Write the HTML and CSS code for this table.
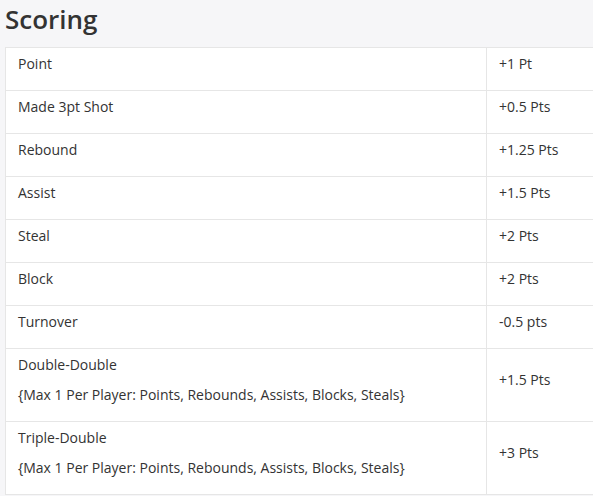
FILE: index.html
```html
<!DOCTYPE html>
<html>
<head>
<meta charset="utf-8">
<link rel="stylesheet" href="styles.css">
</head>
<body>
<div class="page">
  <h2 class="title">Scoring</h2>
  <table class="scoring">
    <tr><td class="name"><p>Point</p></td><td class="pts"><p>+1 Pt</p></td></tr>
    <tr><td class="name"><p>Made 3pt Shot</p></td><td class="pts"><p>+0.5 Pts</p></td></tr>
    <tr><td class="name"><p>Rebound</p></td><td class="pts"><p>+1.25 Pts</p></td></tr>
    <tr><td class="name"><p>Assist</p></td><td class="pts"><p>+1.5 Pts</p></td></tr>
    <tr><td class="name"><p>Steal</p></td><td class="pts"><p>+2 Pts</p></td></tr>
    <tr><td class="name"><p>Block</p></td><td class="pts"><p>+2 Pts</p></td></tr>
    <tr><td class="name"><p>Turnover</p></td><td class="pts"><p>-0.5 pts</p></td></tr>
    <tr><td class="name"><p>Double-Double</p><p>{Max 1 Per Player: Points, Rebounds, Assists, Blocks, Steals}</p></td><td class="pts"><p>+1.5 Pts</p></td></tr>
    <tr><td class="name"><p>Triple-Double</p><p>{Max 1 Per Player: Points, Rebounds, Assists, Blocks, Steals}</p></td><td class="pts"><p>+3 Pts</p></td></tr>
  </table>
</div>
</body>
</html>
```
FILE: styles.css
```css
html, body {
  margin: 0;
  padding: 0;
  background: #f6f6f8;
  overflow: hidden;
}
body {
  font-family: "Open Sans", "Liberation Sans", sans-serif;
  color: #333;
}
.page {
  padding: 0 0 0 5px;
  width: 640px;
}
.title {
  margin: 0;
  padding-top: 1px;
  height: 46px;
  font-size: 26px;
  font-weight: 600;
  line-height: 36px;
  color: #333;
}
.scoring {
  border-collapse: collapse;
  background: #fff;
  width: 630px;
}
.scoring td {
  border: 1px solid #e6e6e6;
  padding: 6px 12px;
  vertical-align: middle;
  font-size: 14px;
  line-height: 20px;
}
.scoring td.name {
  width: 456px;
}
.scoring p {
  margin: 0 0 10px;
}
```
